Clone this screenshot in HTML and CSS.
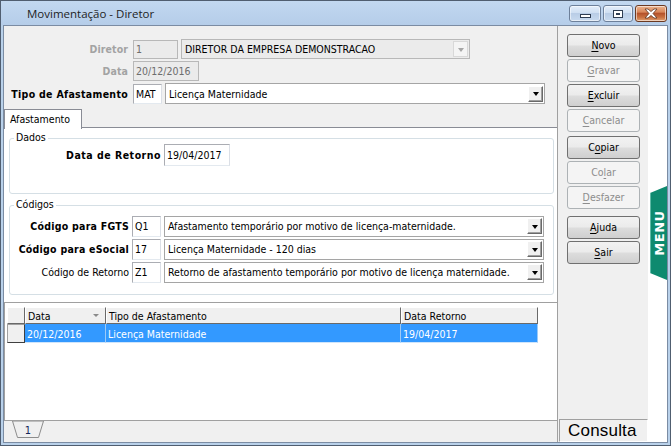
FILE: index.html
```html
<!DOCTYPE html>
<html lang="pt-BR">
<head>
<meta charset="utf-8">
<title>Movimentação - Diretor</title>
<link rel="stylesheet" href="styles.css">
</head>
<body>
<div class="win">
  <div class="titlebar">
    <span class="title">Movimentação - Diretor</span>
    <div class="caption-btns">
      <div class="cbtn cmin"><span class="glyph-min"></span></div>
      <div class="cbtn cmax"><span class="glyph-max"></span></div>
      <div class="cbtn cclose">
        <svg width="16" height="11" viewBox="0 0 16 11"><path d="M2 1 L5 1 L8 3.5 L11 1 L14 1 L10 5.5 L14 10 L11 10 L8 7.5 L5 10 L2 10 L6 5.5 Z" fill="#fff" stroke="#5a3320" stroke-width="0.8" stroke-linejoin="round"/></svg>
      </div>
    </div>
  </div>
  <div class="client">
    <div class="main">
      <div class="head">
        <div class="row">
          <span class="lbl dis">Diretor</span>
          <span class="box dis w45">1</span>
          <span class="combo dis w289"><span class="ctext">DIRETOR DA EMPRESA DEMONSTRACAO</span><span class="dd dd-dis"><i></i></span></span>
        </div>
        <div class="row">
          <span class="lbl dis">Data</span>
          <span class="box dis w66">20/12/2016</span>
        </div>
        <div class="row r3">
          <span class="lbl sp">Tipo de Afastamento</span>
          <span class="box w29">MAT</span>
          <span class="combo w380"><span class="ctext">Licença Maternidade</span><span class="dd"><i></i></span></span>
        </div>
      </div>
      <div class="tabs">
        <div class="tabhead"><div class="tab">Afastamento</div><div class="tabline"></div></div>
        <div class="tabpanel">
          <div class="group dados">
            <span class="legend">Dados</span>
            <div class="grow">
              <span class="glbl b w151">Data de Retorno</span>
              <span class="box w66 h22">19/04/2017</span>
            </div>
          </div>
          <div class="group codigos">
            <span class="legend">Códigos</span>
            <div class="grow">
              <span class="glbl b w119">Código para FGTS</span>
              <span class="box w29 h21">Q1</span>
              <span class="combo w380 h21"><span class="ctext">Afastamento temporário por motivo de licença-maternidade.</span><span class="dd"><i></i></span></span>
            </div>
            <div class="grow">
              <span class="glbl b w119">Código para eSocial</span>
              <span class="box w29 h21">17</span>
              <span class="combo w380 h21"><span class="ctext">Licença Maternidade - 120 dias</span><span class="dd"><i></i></span></span>
            </div>
            <div class="grow">
              <span class="glbl w119">Código de Retorno</span>
              <span class="box w29 h21">Z1</span>
              <span class="combo w380 h21"><span class="ctext">Retorno de afastamento temporário por motivo de licença maternidade.</span><span class="dd"><i></i></span></span>
            </div>
          </div>
        </div>
      </div>
      <div class="grid">
        <div class="grow-h">
          <span class="gc ind"></span>
          <span class="gc c1">Data<i class="sort"></i></span>
          <span class="gc c2">Tipo de Afastamento</span>
          <span class="gc c3">Data Retorno</span>
        </div>
        <div class="grow-d">
          <span class="dc ind"></span>
          <span class="dc c1">20/12/2016</span>
          <span class="dc c2">Licença Maternidade</span>
          <span class="dc c3">19/04/2017</span>
        </div>
      </div>
      <div class="sheets">
        <svg class="sheettab" width="32" height="18" viewBox="0 0 32 18">
          <polygon points="0.5,0 31.5,0 26.5,16.5 5.5,16.5" fill="#f0f0f0" stroke="#8c8c8c" stroke-width="1"/>
          <text x="16" y="13" text-anchor="middle" class="sheettext">1</text>
        </svg>
      </div>
    </div>
    <div class="side">
      <div class="btn"><u>N</u>ovo</div>
      <div class="btn off"><u>G</u>ravar</div>
      <div class="btn"><u>E</u>xcluir</div>
      <div class="btn off"><u>C</u>ancelar</div>
      <div class="btn gap4">C<u>o</u>piar</div>
      <div class="btn off">Co<u>l</u>ar</div>
      <div class="btn off"><u>D</u>esfazer</div>
      <div class="btn gap6"><u>A</u>juda</div>
      <div class="btn"><u>S</u>air</div>
      <div class="status">Consulta</div>
    </div>
    <div class="strip">
      <svg class="menutab" width="17" height="94" viewBox="0 0 17 94">
        <polygon points="0,7 17,0 17,94 0,87" fill="#0e8a6f"/>
        <line x1="0.5" y1="7" x2="0.5" y2="87" stroke="#5fb9a5" stroke-width="1"/>
        <text x="0" y="0" transform="translate(13.5 47) rotate(-90)" text-anchor="middle" class="menutext">MENU</text>
      </svg>
    </div>
  </div>
</div>
</body>
</html>
```
FILE: styles.css
```css
* { box-sizing: border-box; }
html, body { margin: 0; padding: 0; }
body {
  font-family: "DejaVu Sans Condensed", "DejaVu Sans", sans-serif;
  font-size: 10.5px;
  color: #000;
  background: #fff;
}
.win {
  width: 671px;
  height: 446px;
  border: 1px solid #505e70;
  background: #b9d1ea;
  padding: 0 2px 2px 2px;
  display: flex;
  flex-direction: column;
}
.titlebar {
  height: 24px;
  flex: none;
  display: flex;
  align-items: center;
  background: linear-gradient(#c2d8f0, #b5cde9);
  margin: 0 -2px;
  padding: 0 2px;
}
.title {
  font-family: "Open Sans", "Noto Sans", sans-serif;
  font-size: 11.5px;
  color: #1e1e1e;
  padding-left: 24px;
  padding-top: 1px;
}
.caption-btns {
  margin-left: auto;
  display: flex;
  gap: 2px;
  margin-right: 1px;
  align-self: flex-start;
  margin-top: 4px;
}
.cbtn {
  height: 17px;
  border: 1px solid #6d809a;
  border-radius: 3px;
  display: flex;
  align-items: center;
  justify-content: center;
  background: linear-gradient(#e4eefa 0%, #cfdff2 45%, #b9cde6 50%, #c8daef 100%);
  box-shadow: inset 0 0 0 1px rgba(255,255,255,0.55);
}
.cmin { width: 32px; }
.cmax { width: 30px; }
.cclose {
  width: 32px;
  border-color: #6b3a22;
  background: linear-gradient(#eab48f 0%, #d9875a 40%, #b5532b 50%, #c9703f 75%, #e0a070 100%);
}
.glyph-min {
  width: 11px; height: 4px;
  border: 1px solid #2e3d52;
  background: #fff;
  margin-top: 4px;
}
.glyph-max {
  width: 10px; height: 8px;
  border: 1px solid #2e3d52;
  background: #e8f0fa;
  box-shadow: inset 0 0 0 2px #fff, inset 0 0 0 3px #2e3d52;
}
.client {
  flex: 1;
  border: 1px solid #7b8ca3;
  display: flex;
  background: #f0f0f0;
  min-height: 0;
}
.main {
  width: 554px;
  flex: none;
  border-right: 1px solid #a0a0a0;
  display: flex;
  flex-direction: column;
}
.head {
  height: 80px;
  flex: none;
  padding-top: 13px;
  display: flex;
  flex-direction: column;
  gap: 2px;
}
.row {
  display: flex;
  align-items: center;
  height: 20px;
}
.row.r3 { height: 21px; }
.lbl {
  width: 125px;
  text-align: right;
  font-weight: bold;
  padding-right: 1px;
  margin-right: 4px;
  white-space: nowrap;
  letter-spacing: 0.1px;
}
.lbl.sp { letter-spacing: 0.3px; }
.lbl.dis { color: #a3a3a3; }
.box {
  height: 20px;
  border: 1px solid #abadb3;
  border-right-color: #dbdfe6;
  border-bottom-color: #e3e9ef;
  background: #fff;
  padding: 0 2px;
  display: flex;
  align-items: center;
  white-space: nowrap;
  overflow: hidden;
}
.box.dis {
  background: #ebebeb;
  border: 1px solid #b8b8b8;
  color: #6d6d6d;
}
.row .box.dis.w45 { height: 19px; }
.w29 { width: 29px; }
.w45 { width: 45px; }
.w66 { width: 66px; }
.w289 { width: 289px; }
.w380 { width: 380px; }
.h21 { height: 21px; }
.h22 { height: 22px; }
.combo {
  height: 21px;
  margin-left: 3px;
  border: 1px solid #a5a5a5;
  background: #fff;
  display: flex;
  align-items: center;
  padding: 0 1px 0 3px;
  white-space: nowrap;
}
.combo.dis {
  background: #ebebeb;
  border-color: #b8b8b8;
  height: 20px;
  margin-left: 3px;
}
.ctext { flex: 1; overflow: hidden; }
.dd {
  width: 15px;
  height: 16px;
  flex: none;
  background: #f0f0f0;
  border: 1px solid;
  border-color: #fff #696969 #696969 #fff;
  box-shadow: inset -1px -1px 0 #a0a0a0;
  display: flex;
  align-items: center;
  justify-content: center;
}
.dd i {
  width: 0; height: 0;
  border-left: 3.5px solid transparent;
  border-right: 3.5px solid transparent;
  border-top: 4px solid #000;
  margin-top: 1px;
}
.dd-dis {
  border-color: #d8d8d8;
  box-shadow: none;
  background: #f4f4f4;
}
.dd-dis i { border-top-color: #a6a6a6; }

.tabs {
  height: 196px;
  flex: none;
  display: flex;
  flex-direction: column;
}
.tabhead {
  height: 22px;
  flex: none;
  display: flex;
  align-items: flex-end;
  padding-top: 2px;
}
.tab {
  width: 78px;
  height: 20px;
  border: 1px solid #898c95;
  border-bottom: none;
  background: #fff;
  padding: 3px 0 0 5px;
  margin-bottom: -1px;
  position: relative;
  z-index: 1;
}
.tabline {
  flex: 1;
  border-bottom: 1px solid #898c95;
}
.tabpanel {
  flex: 1;
  background: #fff;
  padding: 10px 3px 0 5px;
  display: flex;
  flex-direction: column;
}
.group {
  border: 1px solid #d5dfe5;
  border-radius: 3px;
  background: #fff;
}
.legend {
  display: block;
  width: max-content;
  margin: -8px 0 0 4px;
  padding: 0 2px;
  background: #fff;
  line-height: 13px;
}
.dados { height: 56px; }
.dados .grow { margin-top: 0; height: 22px; }
.codigos { height: 90px; margin-top: 11px; }
.codigos .grow:first-of-type { margin-top: 4px; }
.grow {
  display: flex;
  align-items: center;
  height: 21px;
  margin-bottom: 1px;
}
.codigos .grow { height: 22px; margin-bottom: 1px; }
.glbl {
  text-align: right;
  margin-right: 3px;
  white-space: nowrap;
  flex: none;
}
.glbl.b { font-weight: bold; letter-spacing: 0.25px; }
.dados .glbl.b { letter-spacing: 0.5px; }
.w151 { width: 151px; }
.w119 { width: 119px; }

.grid {
  height: 118px;
  flex: none;
  background: #fff;
  border-top: 1px solid #a0a0a0;
  border-left: 1px solid #a0a0a0;
  padding: 4px 0 0 2px;
}
.grow-h, .grow-d { display: flex; }
.grow-h { height: 17px; }
.grow-d { height: 19px; }
.gc {
  background: #f0f0f0;
  border: 1px solid;
  border-color: #fff #696969 #696969 #fff;
  padding: 2px 0 0 2px;
  white-space: nowrap;
  position: relative;
}
.ind { width: 18px; flex: none; }
.c1 { width: 81px; }
.c2 { width: 295px; }
.c3 { width: 137px; }
.sort {
  position: absolute;
  right: 6px;
  top: 6px;
  width: 0; height: 0;
  border-left: 3px solid transparent;
  border-right: 3px solid transparent;
  border-top: 3px solid #8a8a8a;
}
.dc {
  background: #3399ff;
  color: #fff;
  border-right: 1px solid #9ccaf7;
  border-bottom: 1px solid #cfe5fb;
  padding: 4px 0 0 2px;
  white-space: nowrap;
}
.dc.ind {
  background: #f0f0f0;
  border: 1px solid;
  border-color: #a0a0a0 #404040 #404040 #a0a0a0;
}
.sheets {
  flex: 1;
  border-top: 1px solid #a0a0a0;
  background: #f0f0f0;
  padding-left: 8px;
}
.sheettab { display: block; }
.sheettext { font-size: 11px; fill: #14285a; font-family: "DejaVu Sans Condensed", "DejaVu Sans", sans-serif; }

.side {
  width: 90px;
  flex: none;
  display: flex;
  flex-direction: column;
  padding: 8px 0 0 9px;
  gap: 2px;
}
.btn {
  width: 73px;
  height: 23px;
  flex: none;
  border: 1px solid #707070;
  border-radius: 3px;
  background: linear-gradient(#f2f2f2 0%, #ebebeb 48%, #dddddd 52%, #cfcfcf 100%);
  display: flex;
  align-items: center;
  justify-content: center;
  padding-bottom: 1px;
}
.btn.off {
  border-color: #adb2b5;
  background: #f4f4f4;
  color: #8d8d8d;
}
.btn u { text-decoration: underline; text-underline-offset: 2px; }
.gap4 { margin-top: 2px; }
.gap6 { margin-top: 5px; }
.status {
  margin-top: auto;
  margin-left: -8px;
  width: 89px;
  height: 23px;
  border: 1px solid;
  border-color: #a0a0a0 #fff #fff #a0a0a0;
  font-family: "Liberation Sans", Arial, sans-serif;
  font-size: 17px;
  display: flex;
  align-items: center;
  padding-left: 8px;
  letter-spacing: 0.2px;
}
.strip {
  flex: 1;
  background: #fff;
  position: relative;
}
.menutab {
  position: absolute;
  left: 2px;
  top: 160px;
}
.menutext {
  font-family: "DejaVu Sans", sans-serif;
  font-weight: bold;
  font-size: 13px;
  fill: #fff;
  letter-spacing: 0.5px;
}
```
